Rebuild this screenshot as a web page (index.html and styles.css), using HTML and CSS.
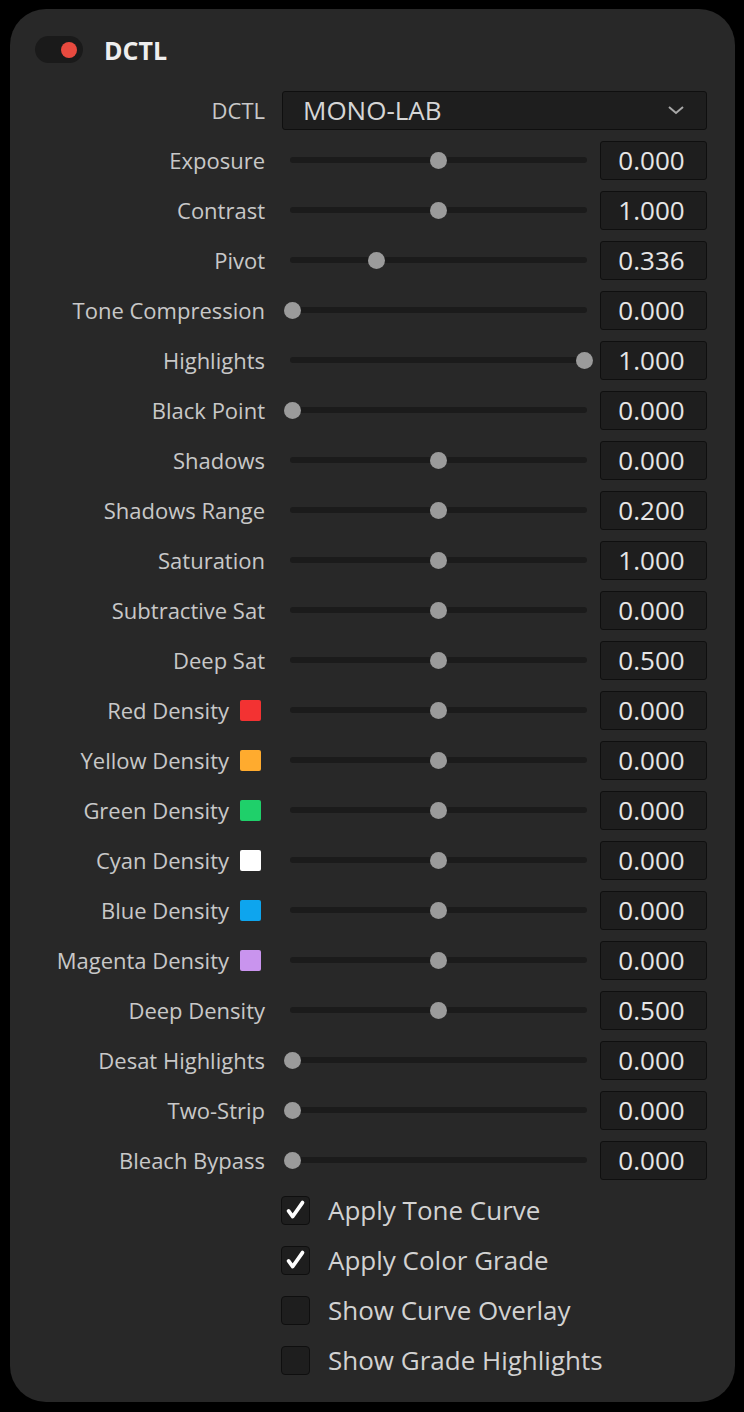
FILE: index.html
```html
<!DOCTYPE html>
<html lang="en">
<head>
    <meta charset="UTF-8">
    <title>DCTL</title>
    <link rel="stylesheet" href="styles.css">
</head>
<body>
    <div class="panel">
        <div class="header">
            <div class="toggle"><span class="toggle-dot"></span></div>
            <div class="title">DCTL</div>
        </div>

        <div class="params">
            <div class="label">DCTL</div>
            <div class="select">
                <span>MONO-LAB</span>
                <svg class="chevron" width="18" height="10" viewBox="0 0 18 10"><polyline points="2,2 9,8 16,2" fill="none" stroke="#a8a8a8" stroke-width="2"/></svg>
            </div>

            <div class="label">Exposure</div>
            <div class="slider"><div class="track"><span class="thumb" style="--v:0.5"></span></div></div>
            <div class="value">0.000</div>

            <div class="label">Contrast</div>
            <div class="slider"><div class="track"><span class="thumb" style="--v:0.5"></span></div></div>
            <div class="value">1.000</div>

            <div class="label">Pivot</div>
            <div class="slider"><div class="track"><span class="thumb" style="--v:0.291"></span></div></div>
            <div class="value">0.336</div>

            <div class="label">Tone Compression</div>
            <div class="slider"><div class="track"><span class="thumb" style="--v:0"></span></div></div>
            <div class="value">0.000</div>

            <div class="label">Highlights</div>
            <div class="slider"><div class="track"><span class="thumb" style="--v:1"></span></div></div>
            <div class="value">1.000</div>

            <div class="label">Black Point</div>
            <div class="slider"><div class="track"><span class="thumb" style="--v:0"></span></div></div>
            <div class="value">0.000</div>

            <div class="label">Shadows</div>
            <div class="slider"><div class="track"><span class="thumb" style="--v:0.5"></span></div></div>
            <div class="value">0.000</div>

            <div class="label">Shadows Range</div>
            <div class="slider"><div class="track"><span class="thumb" style="--v:0.5"></span></div></div>
            <div class="value">0.200</div>

            <div class="label">Saturation</div>
            <div class="slider"><div class="track"><span class="thumb" style="--v:0.5"></span></div></div>
            <div class="value">1.000</div>

            <div class="label">Subtractive Sat</div>
            <div class="slider"><div class="track"><span class="thumb" style="--v:0.5"></span></div></div>
            <div class="value">0.000</div>

            <div class="label">Deep Sat</div>
            <div class="slider"><div class="track"><span class="thumb" style="--v:0.5"></span></div></div>
            <div class="value">0.500</div>

            <div class="label">Red Density <span class="swatch red"></span></div>
            <div class="slider"><div class="track"><span class="thumb" style="--v:0.5"></span></div></div>
            <div class="value">0.000</div>

            <div class="label">Yellow Density <span class="swatch yellow"></span></div>
            <div class="slider"><div class="track"><span class="thumb" style="--v:0.5"></span></div></div>
            <div class="value">0.000</div>

            <div class="label">Green Density <span class="swatch green"></span></div>
            <div class="slider"><div class="track"><span class="thumb" style="--v:0.5"></span></div></div>
            <div class="value">0.000</div>

            <div class="label">Cyan Density <span class="swatch white"></span></div>
            <div class="slider"><div class="track"><span class="thumb" style="--v:0.5"></span></div></div>
            <div class="value">0.000</div>

            <div class="label">Blue Density <span class="swatch blue"></span></div>
            <div class="slider"><div class="track"><span class="thumb" style="--v:0.5"></span></div></div>
            <div class="value">0.000</div>

            <div class="label">Magenta Density <span class="swatch magenta"></span></div>
            <div class="slider"><div class="track"><span class="thumb" style="--v:0.5"></span></div></div>
            <div class="value">0.000</div>

            <div class="label">Deep Density</div>
            <div class="slider"><div class="track"><span class="thumb" style="--v:0.5"></span></div></div>
            <div class="value">0.500</div>

            <div class="label">Desat Highlights</div>
            <div class="slider"><div class="track"><span class="thumb" style="--v:0"></span></div></div>
            <div class="value">0.000</div>

            <div class="label">Two-Strip</div>
            <div class="slider"><div class="track"><span class="thumb" style="--v:0"></span></div></div>
            <div class="value">0.000</div>

            <div class="label">Bleach Bypass</div>
            <div class="slider"><div class="track"><span class="thumb" style="--v:0"></span></div></div>
            <div class="value">0.000</div>

            <div class="check">
                <span class="box"><svg width="29" height="29" viewBox="0 0 29 29"><polyline points="7,15 11.5,21 22,6" fill="none" stroke="#fff" stroke-width="4" stroke-linecap="round" stroke-linejoin="round"/></svg></span>
                Apply Tone Curve
            </div>
            <div class="check">
                <span class="box"><svg width="29" height="29" viewBox="0 0 29 29"><polyline points="7,15 11.5,21 22,6" fill="none" stroke="#fff" stroke-width="4" stroke-linecap="round" stroke-linejoin="round"/></svg></span>
                Apply Color Grade
            </div>
            <div class="check">
                <span class="box"></span>
                Show Curve Overlay
            </div>
            <div class="check">
                <span class="box"></span>
                Show Grade Highlights
            </div>
        </div>
    </div>
</body>
</html>
```

FILE: styles.css
```css
body {
    margin: 0;
    background: #000;
    font-family: 'Open Sans', 'Noto Sans', sans-serif;
}
.panel {
    box-sizing: border-box;
    width: 725px;
    margin: 9px 0 0 10px;
    padding: 27px 28px 17px 20px;
    background: #282828;
    border-radius: 36px;
}
.header {
    display: flex;
    align-items: center;
    gap: 21px;
    padding-left: 5px;
    height: 27px;
    margin-bottom: 22px;
}
.toggle {
    width: 48px;
    height: 27px;
    border-radius: 14px;
    background: #1a1a1a;
    display: flex;
    align-items: center;
    justify-content: flex-end;
    padding-right: 6px;
    box-sizing: border-box;
}
.toggle-dot {
    width: 16px;
    height: 16px;
    border-radius: 50%;
    background: #e84a3f;
}
.title {
    color: #eeeeee;
    font-size: 25px;
    font-weight: bold;
}
.params {
    display: grid;
    grid-template-columns: 235px 1fr 107px;
    grid-auto-rows: 50px;
    align-items: center;
}
.label {
    display: flex;
    align-items: center;
    justify-content: flex-end;
    color: #c8c8c8;
    font-size: 22px;
    white-space: nowrap;
}
.swatch {
    width: 21px;
    height: 21px;
    border-radius: 2px;
    margin: 0 4px 0 11px;
}
.red { background: #f33232; }
.yellow { background: #ffab2e; }
.green { background: #1fd06a; }
.white { background: #ffffff; }
.blue { background: #0ea5ee; }
.magenta { background: #c994ee; }
.select {
    grid-column: 2 / 4;
    margin-left: 17px;
    height: 39px;
    box-sizing: border-box;
    background: #1e1e1e;
    border: 1.5px solid #0f0f0f;
    border-radius: 3px;
    display: flex;
    align-items: center;
    justify-content: space-between;
    padding: 0 21px 0 20px;
    color: #d6d6d6;
    font-size: 26px;
}
.slider {
    padding: 0 13px 0 25px;
}
.track {
    position: relative;
    height: 6px;
    border-radius: 3px;
    background: #1b1b1b;
}
.thumb {
    position: absolute;
    top: -5px;
    left: calc(var(--v) * 292px - 6.5px);
    width: 17px;
    height: 17px;
    border-radius: 50%;
    background: #9b9b9b;
}
.value {
    height: 39px;
    box-sizing: border-box;
    background: #1e1e1e;
    border: 1.5px solid #0f0f0f;
    border-radius: 3px;
    color: #e6e6e6;
    font-size: 26px;
    display: flex;
    align-items: center;
    justify-content: center;
    padding-right: 4px;
}
.check {
    grid-column: 2 / 4;
    margin-left: 16px;
    display: flex;
    align-items: center;
    gap: 18px;
    color: #d2d2d2;
    font-size: 26px;
}
.box {
    width: 29px;
    height: 29px;
    box-sizing: border-box;
    border: 1.5px solid #0f0f0f;
    border-radius: 4px;
    background: #1e1e1e;
    display: flex;
    align-items: center;
    justify-content: center;
}
```
